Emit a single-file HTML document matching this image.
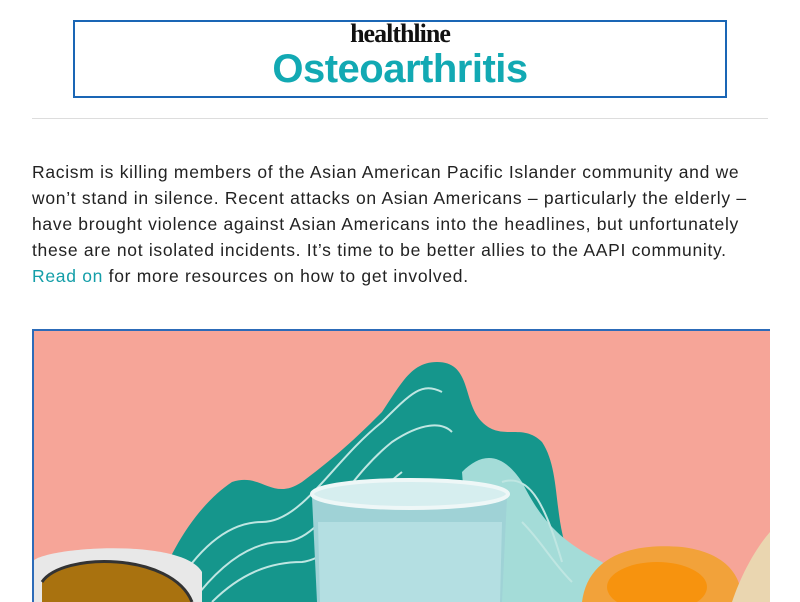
<!DOCTYPE html>
<html><head><meta charset="utf-8"><style>
html,body{margin:0;padding:0;background:#fff;width:800px;height:600px;overflow:hidden}
.hdr{position:absolute;left:73px;top:20px;width:650px;height:74px;border:2px solid #1a66b5;text-align:center}
.hl{position:absolute;left:0;right:0;top:-1px;font:bold 26px/26px "Liberation Serif",serif;color:#111;letter-spacing:-1px}
.os{position:absolute;left:0;right:0;top:23px;font:bold 40px/48px "Liberation Sans",sans-serif;color:#12a9b3;letter-spacing:-0.5px}
.hr{position:absolute;left:32px;top:118px;width:736px;height:1px;background:#ddd}
.txt{position:absolute;left:32px;top:159px;width:760px;font:17.5px/26px "Liberation Sans",sans-serif;letter-spacing:0.7px;color:#222;white-space:nowrap}
.txt a{color:#139ea8;text-decoration:none}
.img{position:absolute;left:32px;top:329px;width:736px;height:271px;border-top:2px solid #2c6bb8;border-left:2px solid #2c6bb8;overflow:hidden;background:#f6a598}
</style></head><body>
<div class="hdr"><div class="hl">healthline</div><div class="os">Osteoarthritis</div></div>
<div class="hr"></div>
<div class="txt">Racism is killing members of the Asian American Pacific Islander community and we<br>won’t stand in silence. Recent attacks on Asian Americans – particularly the elderly –<br>have brought violence against Asian Americans into the headlines, but unfortunately<br>these are not isolated incidents. It’s time to be better allies to the AAPI community.<br><a>Read on</a> for more resources on how to get involved.</div>
<div class="img">
<svg width="736" height="271" viewBox="32 329 736 271" xmlns="http://www.w3.org/2000/svg">
<path d="M150 600 C170 540 200 500 230 480 C260 470 270 500 300 480 C340 450 360 430 380 410 C400 380 410 360 435 360 C470 360 460 400 480 420 C500 440 520 420 540 440 C560 470 550 520 570 560 L600 600 Z" fill="#15968c"/>
<path d="M460 470 C480 450 500 450 520 480 C540 520 560 540 600 560 L640 600 L470 600 Z" fill="#a4dcd8"/>
<g fill="none" stroke="#bfe6e2" stroke-width="2">
<path d="M170 590 C200 540 230 520 260 520 C300 520 330 460 380 420 C410 390 420 380 440 390"/>
<path d="M190 600 C220 560 250 540 280 540 C320 540 340 480 390 440 C420 420 440 420 450 430"/>
<path d="M210 600 C240 570 270 560 300 560 C340 555 360 500 400 470"/>
<path d="M520 520 C540 540 550 560 570 580"/>
<path d="M500 480 C530 470 545 510 560 560"/>
</g>
<path d="M310 495 C320 470 490 470 505 495 L500 600 L315 600 Z" fill="#9fd2d6"/>
<ellipse cx="408" cy="492" rx="98" ry="14" fill="#d6eeef" stroke="#eef7f7" stroke-width="4"/>
<path d="M316 520 L500 520 L498 600 L318 600 Z" fill="#b4dfe2"/>
<path d="M30 560 C40 545 180 535 200 570 L200 600 L30 600 Z" fill="#e8e8e8"/>
<path d="M40 580 C60 550 170 550 190 600 L40 600 Z" fill="#a9720f"/>
<path d="M40 580 C60 550 170 550 190 600" fill="none" stroke="#333" stroke-width="3"/>
<path d="M580 600 C585 560 620 540 680 545 C720 550 740 570 740 600 Z" fill="#f2a23a"/>
<ellipse cx="655" cy="585" rx="50" ry="25" fill="#f7930e"/>
<path d="M730 600 C740 570 755 545 768 530 L768 600 Z" fill="#ead6b0"/>
</svg>
</div>
</body></html>
